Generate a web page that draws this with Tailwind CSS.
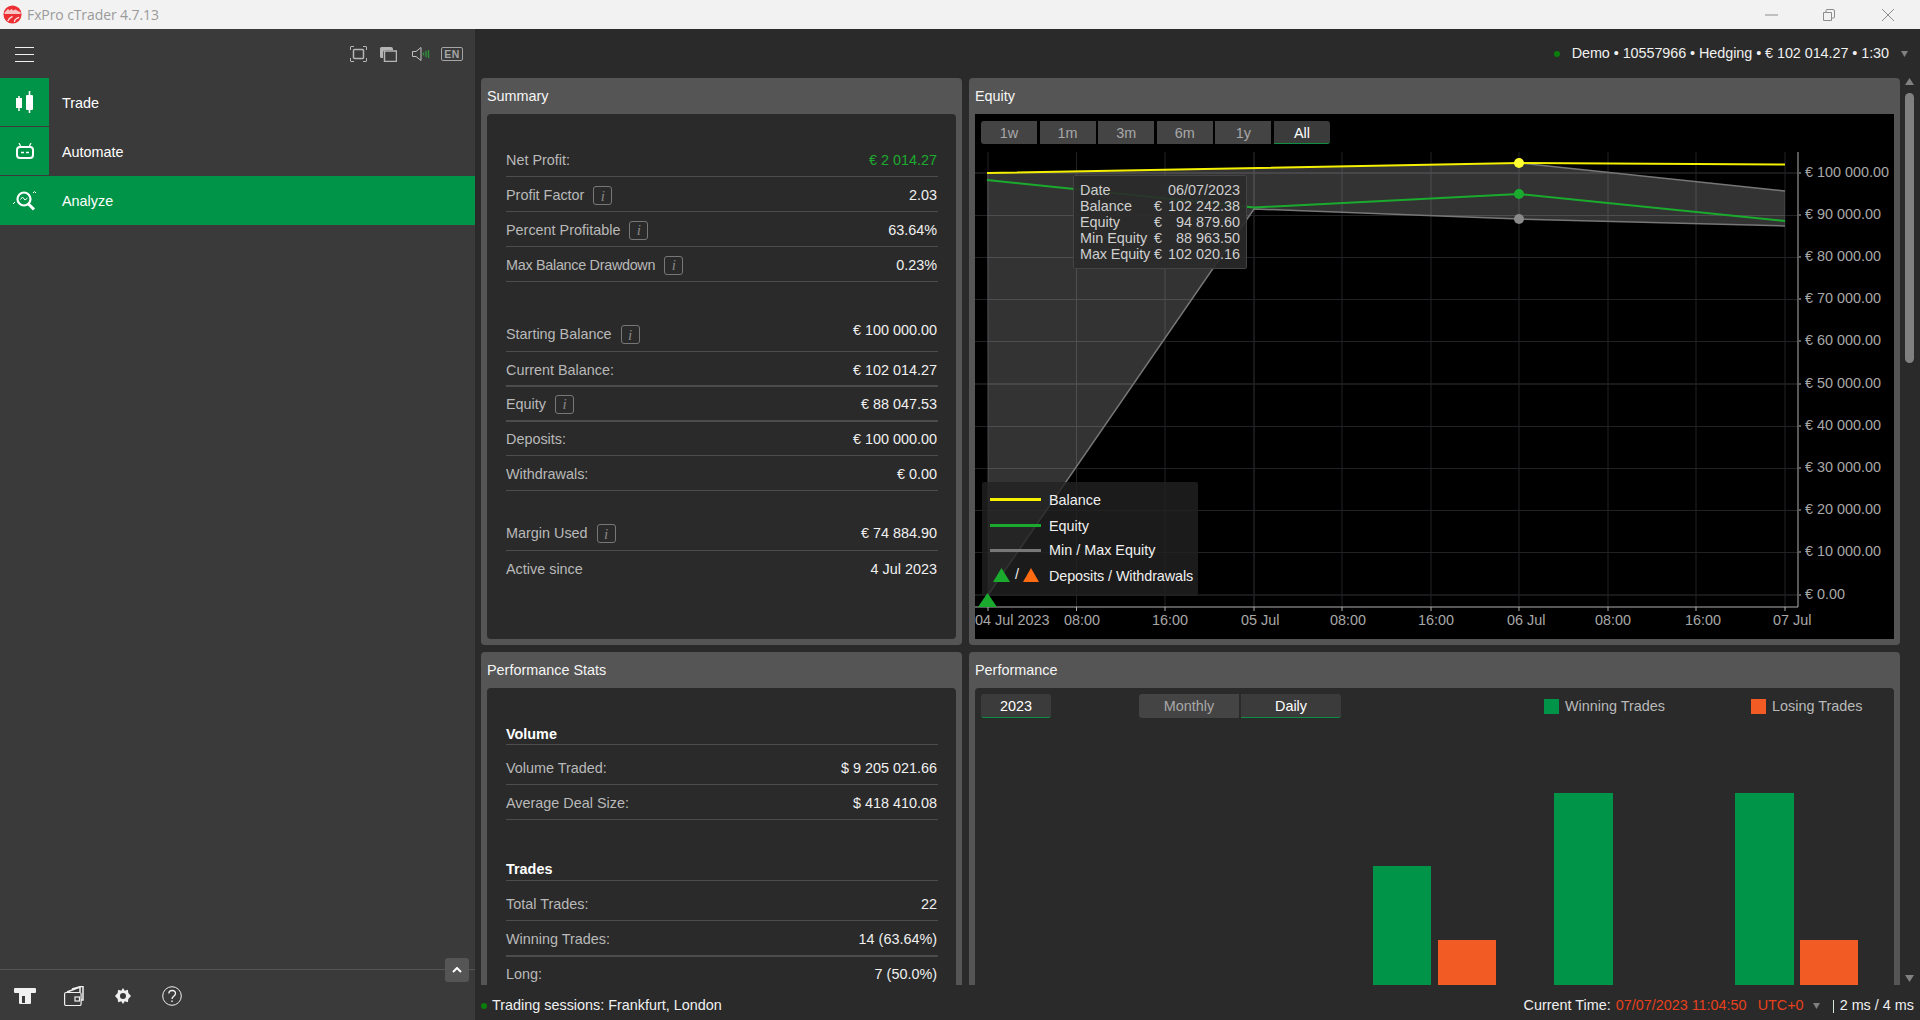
<!DOCTYPE html>
<html lang="en">
<head>
  <meta charset="UTF-8" />
  <title>FxPro cTrader 4.7.13</title>
  <script src="https://cdn.jsdelivr.net/npm/@tailwindcss/browser@4"></script>
</head>
<body class="bg-[#2a2a2a]">
<div class="flex h-[1020px] w-[1920px] flex-col overflow-hidden font-['Liberation_Sans',sans-serif] text-[14.4px] text-[#f0f0f0]">

  <!-- window title bar -->
  <header class="flex h-[29px] items-center bg-[#f2f2f2]">
    <svg class="ml-[3px] h-[19px] w-[19px]" viewBox="0 0 20 20">
      <circle cx="10" cy="10" r="9.500" fill="#ec2f33" />
      <path d="M1.500 7.500c3-1 2-3 4-3 1 0 1 2 2 1s1-2 2-1 1 2 2 1 2-1 3 0 2 1 4 2v2H2z" fill="#f9c6c6" />
      <path d="M5 17c1-3 3-4 5-5M12 18c0-2 2-4 5-5" fill="none" stroke="#fde3e3" stroke-width="1.400" />
    </svg>
    <span class="ml-[5px] font-['Open_Sans',sans-serif] text-[14px] tracking-[-0.1px] text-[#9a9a9a]">FxPro cTrader 4.7.13</span>
    <div class="ml-auto flex items-center">
      <svg class="mr-[45px] h-[12px] w-[13px]" viewBox="0 0 13 12"><path d="M0 6h13" stroke="#8c8c8c" /></svg>
      <svg class="mr-[47px] h-[12px] w-[12px]" viewBox="0 0 12 12"><path d="M.5 3.500h8v8h-8zM3 3V1.500q0-1 1-1h6q1.500 0 1.500 1.500v6q0 1-1 1H9" fill="none" stroke="#8c8c8c" /></svg>
      <svg class="mr-[26px] h-[12px] w-[12px]" viewBox="0 0 12 12"><path d="M0 0l12 12M12 0L0 12" stroke="#8c8c8c" /></svg>
    </div>
  </header>

  <div class="flex min-h-0 flex-1">
    <!-- left nav -->
    <aside class="relative flex w-[475px] flex-col bg-[#3a3a3a]">
      <div class="flex h-[49px] items-center pt-[1px] pl-[15px]">
        <svg class="h-[15px] w-[19px]" viewBox="0 0 19 15"><path d="M0 .5h19M0 7.500h19M0 14.500h19" stroke="#f0f0f0" /></svg>
        <div class="ml-[316px] flex items-center">
          <svg class="h-[16px] w-[17px]" viewBox="0 0 17 16" fill="none" stroke="#b5b5b5"><path d="M.5 4V1q0-.5.5-.5h3M13 .5h3q.5 0 .5.500v3M.5 12v3q0 .5.5.5h3M13 15.500h3q.5 0 .5-.5v-3" /><rect x="3.500" y="3.500" width="10" height="9" rx="1" stroke-width="1.500" /></svg>
          <svg class="ml-[13px] h-[15px] w-[17px]" viewBox="0 0 17 15"><path d="M0 1.500Q0 0 1.500 0H11q2 0 2 2v1H6Q3 3 3 6v5H1.500Q0 11 0 9.500z" fill="#b5b5b5" /><rect x="4.500" y="4" width="12" height="10.500" fill="none" stroke="#b5b5b5" stroke-width="1.500" /></svg>
          <svg class="ml-[15px] h-[14px] w-[19px]" viewBox="0 0 19 14" fill="none"><path d="M.5 4.500h3.500l5-4v13l-5-4H.5z" stroke="#c0c0c0" /><path d="M11.500 5.500v3" stroke="#2f8a3a" stroke-width="1.500" /><path d="M14 4v6" stroke="#2f8a3a" stroke-width="1.500" /><path d="M16.500 3v8" stroke="#2f8a3a" stroke-width="1.500" /></svg>
          <span class="ml-[10px] flex h-[14px] w-[22px] items-center justify-center rounded-[2px] border border-[#a5a5a5] text-[10.5px] leading-none font-bold tracking-[0.4px] text-[#a5a5a5]">EN</span>
        </div>
      </div>

      <nav class="flex flex-col gap-[1px]">
        <a class="flex h-[48px] items-center">
          <span class="flex h-full w-[49px] items-center justify-center bg-[#009448]">
            <svg class="h-[22px] w-[18px]" viewBox="0 0 18 22" fill="#fff"><rect x="0" y="7" width="6" height="10" /><rect x="2.250" y="5" width="1.500" height="15" /><rect x="10" y="4" width="7" height="15" rx="1" /><rect x="12.700" y="0" width="1.600" height="22" /></svg>
          </span>
          <span class="ml-[13px] pt-[3px] text-white">Trade</span>
        </a>
        <a class="flex h-[48px] items-center">
          <span class="flex h-full w-[49px] items-center justify-center bg-[#009448]">
            <svg class="h-[16px] w-[18px]" viewBox="0 0 18 16"><path d="M3 0l2 4M15 0l-2 4" stroke="#fff" stroke-width="1.200" /><rect x="1" y="4" width="16" height="11" rx="3" fill="none" stroke="#fff" stroke-width="2" /><path d="M5 9.500h3M10 9.500h3" stroke="#fff" stroke-width="1.500" /></svg>
          </span>
          <span class="ml-[13px] pt-[3px] text-white">Automate</span>
        </a>
        <a class="flex h-[49px] items-center bg-[#009448]">
          <span class="flex h-full w-[49px] items-center justify-center">
            <svg class="h-[21px] w-[23px]" viewBox="0 0 23 21" fill="none" stroke="#fff"><circle cx="11" cy="9" r="6.500" stroke-width="2.200" /><path d="M15.500 14l5.500 5.500" stroke-width="3" /><path d="M7.500 9.500l2-2.500 2.500 3 2.500-2" stroke-width="1" /><path d="M0 14l2-2M20 3l1.500-1.500L23 3" stroke-width="1" /></svg>
          </span>
          <span class="ml-[13px] pt-[2px] text-white">Analyze</span>
        </a>
      </nav>

      <div class="relative mt-auto h-[51px] border-t border-[#545454]">
        <div class="flex h-full items-center gap-[28px] pt-[1px] pl-[14px]">
          <svg class="h-[16px] w-[22px]" viewBox="0 0 22 16" fill="#f0f0f0"><rect x="0" y="0" width="22" height="5" rx="1" /><rect x="5" y="4" width="12" height="12" rx="1" /><rect x="8" y="8" width="3" height="7" fill="#3a3a3a" /></svg>
          <svg class="h-[20px] w-[21px]" viewBox="0 0 21 20" fill="none" stroke="#f0f0f0"><rect x=".6" y="6.500" width="16.500" height="13" rx="1.500" stroke-width="1.200" /><path d="M3 6l13-5v5" stroke-width="1.500" /><path d="M8 3l11-3v14h-2" stroke-width="1.500" /><rect x="11" y="11" width="4.500" height="4" stroke-width="1.200" /></svg>
          <svg class="ml-[2px] h-[16px] w-[16px]" viewBox="0 0 18 18"><path d="M9 0l2 3 3.500-1 .5 3.500L18 9l-3 3.500-.5 3.500-3.500-1-2 3-2-3-3.500 1L3 12.500 0 9l3-3.500.5-3.500L7 3z" fill="#f0f0f0" /><circle cx="9" cy="9" r="3.400" fill="#3a3a3a" /></svg>
          <svg class="ml-[3px] h-[20px] w-[20px]" viewBox="0 0 20 20" fill="none" stroke="#f0f0f0"><circle cx="10" cy="10" r="9.300" /><path d="M6.800 7.500C7 5 9 4.500 10 4.500c2 0 3.500 1.300 3.500 3 0 2.800-3.500 2.800-3.500 5.500" stroke-width="1.300" /><path d="M10 14.500v1.500" stroke-width="1.400" /></svg>
        </div>
        <button class="absolute top-[-12px] right-[6px] flex h-[24px] w-[24px] items-center justify-center rounded-[3px] bg-[#555]">
          <svg class="h-[6px] w-[10px]" viewBox="0 0 10 6"><path d="M1 5l4-4 4 4" fill="none" stroke="#fff" stroke-width="2" /></svg>
        </button>
      </div>
    </aside>

    <!-- main area -->
    <main class="flex min-w-0 flex-1 flex-col">
      <div class="flex h-[49px] items-center justify-end pt-[1px]">
        <span class="mr-[12px] h-[6px] w-[6px] rounded-full bg-[#0a7d0a]"></span>
        <span class="tracking-[-0.06px]">Demo • 10557966 • Hedging • € 102 014.27 • 1:30</span>
        <svg class="mr-[12px] ml-[12px] h-[6px] w-[7px]" viewBox="0 0 7 6"><path d="M0 0h7L3.500 6Z" fill="#808080" /></svg>
      </div>

      <div class="flex min-h-0 flex-1">
        <div class="grid h-[907px] grow grid-cols-[481px_931px] grid-rows-[567px_400px] gap-[7px] overflow-hidden pl-[6px]">

          <!-- Summary -->
          <section class="flex flex-col rounded-[4px] bg-[#555] px-[6px] pb-[6px]">
            <h2 class="flex h-[36px] shrink-0 items-center pt-[2px] text-[#f5f5f5]">Summary</h2>
            <div class="flex-1 rounded-[4px] bg-[#2a2a2a] pt-[28px] pr-[18px] pl-[19px] text-[#f0f0f0]">
              <div class="flex h-[35px] items-center justify-between border-b border-[#4c4c4c] pt-[4px]"><span class="text-[#b9b9b9]">Net Profit:</span><span class="pr-[1px] text-[#1cab2f]">€ 2 014.27</span></div>
              <div class="flex h-[35px] items-center justify-between border-b border-[#4c4c4c] pt-[4px]"><span class="flex items-center text-[#b9b9b9]">Profit Factor<i class="ml-[9px] flex h-[19px] w-[19px] items-center justify-center rounded-[3px] border border-[#777] font-['Liberation_Serif',serif] text-[15px] text-[#888]">i</i></span><span class="pr-[1px]">2.03</span></div>
              <div class="flex h-[35px] items-center justify-between border-b border-[#4c4c4c] pt-[3px]"><span class="flex items-center text-[#b9b9b9]">Percent Profitable<i class="ml-[9px] flex h-[19px] w-[19px] items-center justify-center rounded-[3px] border border-[#777] font-['Liberation_Serif',serif] text-[15px] text-[#888]">i</i></span><span class="pr-[1px]">63.64%</span></div>
              <div class="flex h-[35px] items-center justify-between border-b border-[#4c4c4c] pt-[3px]"><span class="flex items-center tracking-[-0.3px] text-[#b9b9b9]">Max Balance Drawdown<i class="ml-[9px] flex h-[19px] w-[19px] items-center justify-center rounded-[3px] border border-[#777] font-['Liberation_Serif',serif] text-[15px] text-[#888]">i</i></span><span class="pr-[1px]">0.23%</span></div>

              <div class="mt-[35px] flex h-[35px] items-center justify-between border-b border-[#4c4c4c] pt-[2px]"><span class="flex items-center text-[#b9b9b9]">Starting Balance<i class="ml-[9px] flex h-[19px] w-[19px] items-center justify-center rounded-[3px] border border-[#777] font-['Liberation_Serif',serif] text-[15px] text-[#888]">i</i></span><span class="mb-[8px] pr-[1px]">€ 100 000.00</span></div>
              <div class="flex h-[35px] items-center justify-between border-b-2 border-[#4c4c4c] pt-[4px]"><span class="text-[#b9b9b9]">Current Balance:</span><span class="pr-[1px]">€ 102 014.27</span></div>
              <div class="flex h-[35px] items-center justify-between border-b-2 border-[#4c4c4c] pt-[2px]"><span class="flex items-center text-[#b9b9b9]">Equity<i class="ml-[9px] flex h-[19px] w-[19px] items-center justify-center rounded-[3px] border border-[#777] font-['Liberation_Serif',serif] text-[15px] text-[#888]">i</i></span><span class="pr-[1px]">€ 88 047.53</span></div>
              <div class="flex h-[34px] items-center justify-between border-b border-[#4c4c4c] pt-[2px]"><span class="text-[#b9b9b9]">Deposits:</span><span class="pr-[1px]">€ 100 000.00</span></div>
              <div class="flex h-[35px] items-center justify-between border-b border-[#4c4c4c] pt-[3px]"><span class="text-[#b9b9b9]">Withdrawals:</span><span class="pr-[1px]">€ 0.00</span></div>

              <div class="mt-[25px] flex h-[35px] items-center justify-between border-b border-[#4c4c4c] pt-[2px]"><span class="flex items-center text-[#b9b9b9]">Margin Used<i class="ml-[9px] flex h-[19px] w-[19px] items-center justify-center rounded-[3px] border border-[#777] font-['Liberation_Serif',serif] text-[15px] text-[#888]">i</i></span><span class="pr-[1px]">€ 74 884.90</span></div>
              <div class="flex h-[35px] items-center justify-between pt-[2px]"><span class="text-[#b9b9b9]">Active since</span><span class="pr-[1px]">4 Jul 2023</span></div>
            </div>
          </section>

          <!-- Equity -->
          <section class="flex flex-col rounded-[4px] bg-[#555] px-[6px] pb-[6px]">
            <h2 class="flex h-[36px] shrink-0 items-center pt-[2px] text-[#f5f5f5]">Equity</h2>
            <div class="relative flex-1 bg-black">
              <svg class="absolute inset-0 h-full w-full" viewBox="975 114 919 525" font-family="Liberation Sans" font-size="14.400">
                <g stroke="#222226">
                  <path d="M988 152V607M1076.500 152V607M1165 152V607M1342 152V607M1431 152V607M1519 152V607M1608 152V607M1696 152V607M1785 152V607" />
                  <path d="M975 215.500H1798M975 257.500H1798M975 299.500H1798M975 341.500H1798M975 426.500H1798M975 468.500H1798M975 510.500H1798M975 552.500H1798" />
                  <path d="M975 173H1798M975 384H1798M975 595H1798M1254 152V607" stroke-width="1.500" />
                </g>
                <path d="M987 173L1519 163L1785 191L1785 226L1519 219L1254 209L988 595Z" fill="#fff" fill-opacity="0.2" />
                <path d="M1519 163L1785 191M1785 226L1519 219L1254 209L988 595" fill="none" stroke="#777" stroke-width="1.500" />
                <path d="M987 180L1254 207.500L1519 194L1785 221" fill="none" stroke="#1aab2e" stroke-width="2" />
                <path d="M987 173L1519 163L1785 164.500" fill="none" stroke="#f4f000" stroke-width="2" />
                <circle cx="1519" cy="219" r="5" fill="#8a8a8a" />
                <circle cx="1519" cy="194" r="5" fill="#1aab2e" />
                <circle cx="1519" cy="163" r="5" fill="#ffff33" />
                <path d="M1798 152V607H975" fill="none" stroke="#b0b0b0" />
                <path d="M988 607v4M1076.500 607v4M1165 607v4M1254 607v4M1342 607v4M1431 607v4M1519 607v4M1608 607v4M1696 607v4M1785 607v4M1799 173h2M1799 215h2M1799 257h2M1799 299h2M1799 341h2M1799 384h2M1799 426h2M1799 468h2M1799 510h2M1799 552h2M1799 595h2" stroke="#b0b0b0" />
                <g fill="#a8a8a8">
                  <text x="1805" y="177">€ 100 000.00</text>
                  <text x="1805" y="219">€ 90 000.00</text>
                  <text x="1805" y="261">€ 80 000.00</text>
                  <text x="1805" y="303">€ 70 000.00</text>
                  <text x="1805" y="345">€ 60 000.00</text>
                  <text x="1805" y="388">€ 50 000.00</text>
                  <text x="1805" y="430">€ 40 000.00</text>
                  <text x="1805" y="472">€ 30 000.00</text>
                  <text x="1805" y="514">€ 20 000.00</text>
                  <text x="1805" y="556">€ 10 000.00</text>
                  <text x="1805" y="599">€ 0.00</text>
                  <text x="975" y="625">04 Jul 2023</text>
                  <text x="1064" y="625">08:00</text>
                  <text x="1152" y="625">16:00</text>
                  <text x="1241" y="625">05 Jul</text>
                  <text x="1330" y="625">08:00</text>
                  <text x="1418" y="625">16:00</text>
                  <text x="1507" y="625">06 Jul</text>
                  <text x="1595" y="625">08:00</text>
                  <text x="1685" y="625">16:00</text>
                  <text x="1773" y="625">07 Jul</text>
                </g>
              </svg>

              <div class="relative flex gap-[2.6px] pt-[7px] pl-[6px] text-[#a8a8a8]">
                <button class="h-[23px] w-[56px] rounded-l-[3px] bg-[#444] pt-[2px]">1w</button>
                <button class="h-[23px] w-[56px] bg-[#444] pt-[2px]">1m</button>
                <button class="h-[23px] w-[56px] bg-[#444] pt-[2px]">3m</button>
                <button class="h-[23px] w-[56px] bg-[#444] pt-[2px]">6m</button>
                <button class="h-[23px] w-[56px] bg-[#444] pt-[2px]">1y</button>
                <button class="h-[23px] w-[56px] rounded-r-[3px] border-b border-[#0f8f43] bg-[#3b3b3b] pt-[2px] text-white">All</button>
              </div>

              <!-- hover tooltip -->
              <div class="absolute top-[61px] left-[98px] grid h-[94px] w-[174px] grid-cols-[74px_auto_1fr] rounded-[2px] border border-[#444] bg-[#2a2a2a]/90 px-[6px] py-[6px] text-[14.4px] leading-[16px] text-[#cfcfcf]">
                <span>Date</span><span class="col-span-2 text-right">06/07/2023</span>
                <span>Balance</span><span>€</span><span class="text-right">102 242.38</span>
                <span>Equity</span><span>€</span><span class="text-right">94 879.60</span>
                <span>Min Equity</span><span>€</span><span class="text-right">88 963.50</span>
                <span class="whitespace-nowrap tracking-[-0.1px]">Max Equity</span><span>€</span><span class="text-right">102 020.16</span>
              </div>

              <!-- chart legend -->
              <div class="absolute top-[368px] left-[7px] h-[114px] w-[216px] rounded-[2px] bg-[#222]/80 text-[#f0f0f0]">
                <div class="flex h-[25px] items-center pt-[10px] pl-[8px]"><span class="h-[3px] w-[51px] bg-[#f4f000]"></span><span class="ml-[8px] pt-[2px]">Balance</span></div>
                <div class="mt-[10px] flex h-[16px] items-center pl-[8px]"><span class="h-[3px] w-[51px] bg-[#1aab2e]"></span><span class="ml-[8px] pt-[3px]">Equity</span></div>
                <div class="mt-[9px] flex h-[16px] items-center pl-[8px]"><span class="h-[3px] w-[51px] bg-[#777]"></span><span class="ml-[8px] pt-[2px]">Min / Max Equity</span></div>
                <div class="mt-[9px] flex h-[16px] items-center pl-[10px]">
                  <svg class="h-[14px] w-[47px]" viewBox="0 0 47 14"><path d="M9.500 0L18 14H1Z" fill="#1aab2e" /><path d="M39 0L47 14H31Z" fill="#ff6a13" /></svg>
                  <span class="absolute left-[33px]">/</span>
                  <span class="ml-[2px] pt-[3px] pl-[8px] tracking-[-0.1px]">Deposits / Withdrawals</span>
                </div>
              </div>

              <!-- first deposit marker sits on top of the legend -->
              <svg class="absolute top-[479px] left-[3px] h-[14px] w-[19px]" viewBox="0 0 19 14"><path d="M9.500 0L19 14H0Z" fill="#1aab2e" /></svg>
            </div>
          </section>

          <!-- Performance Stats -->
          <section class="flex flex-col rounded-[4px] bg-[#555] px-[6px]">
            <h2 class="flex h-[36px] shrink-0 items-center pt-[2px] text-[#f5f5f5]">Performance Stats</h2>
            <div class="flex-1 rounded-[4px] bg-[#2a2a2a] pt-[32px] pr-[18px] pl-[19px]">
              <div class="flex h-[25px] items-center border-b border-[#4c4c4c] pt-[5px] font-bold text-white">Volume</div>
              <div class="flex h-[40px] items-center justify-between border-b border-[#4c4c4c] pt-[8px]"><span class="text-[#b9b9b9]">Volume Traded:</span><span class="pr-[1px]">$ 9 205 021.66</span></div>
              <div class="flex h-[35px] items-center justify-between border-b border-[#4c4c4c] pt-[4px]"><span class="text-[#b9b9b9]">Average Deal Size:</span><span class="pr-[1px]">$ 418 410.08</span></div>

              <div class="mt-[35px] flex h-[26px] items-center border-b border-[#4c4c4c] pt-[4px] font-bold text-white">Trades</div>
              <div class="flex h-[40px] items-center justify-between border-b border-[#4c4c4c] pt-[8px]"><span class="text-[#b9b9b9]">Total Trades:</span><span class="pr-[1px]">22</span></div>
              <div class="flex h-[36px] items-center justify-between border-b-2 border-[#4c4c4c] pt-[4px]"><span class="text-[#b9b9b9]">Winning Trades:</span><span class="pr-[1px]">14 (63.64%)</span></div>
              <div class="flex h-[35px] items-center justify-between"><span class="text-[#b9b9b9]">Long:</span><span class="pr-[1px]">7 (50.0%)</span></div>
            </div>
          </section>

          <!-- Performance -->
          <section class="flex flex-col rounded-[4px] bg-[#555] px-[6px]">
            <h2 class="flex h-[36px] shrink-0 items-center pt-[2px] text-[#f5f5f5]">Performance</h2>
            <div class="relative flex-1 rounded-[4px] bg-[#2a2a2a]">
              <svg class="absolute inset-0 h-full w-full" viewBox="975 688 919 364">
                <rect x="1373" y="866" width="58" height="190" fill="#009448" />
                <rect x="1438" y="940" width="58" height="116" fill="#f35b24" />
                <rect x="1554" y="793" width="59" height="263" fill="#009448" />
                <rect x="1735" y="793" width="59" height="263" fill="#009448" />
                <rect x="1800" y="940" width="58" height="116" fill="#f35b24" />
              </svg>
              <div class="relative flex items-center pt-[6px] pl-[6px]">
                <button class="h-[24px] w-[70px] rounded-[3px] border-b border-[#0f8f43] bg-[#3b3b3b] pt-[2px] text-white">2023</button>
                <button class="ml-[88px] h-[24px] w-[100px] rounded-l-[3px] bg-[#444] pt-[2px] text-[#a8a8a8]">Monthly</button>
                <button class="ml-[2px] h-[24px] w-[100px] rounded-r-[3px] border-b border-[#0f8f43] bg-[#3b3b3b] pt-[2px] text-white">Daily</button>
                <span class="ml-[203px] h-[15px] w-[15px] bg-[#009448]"></span>
                <span class="ml-[6px] w-[186px] pt-[2px] text-[#b9b9b9]">Winning Trades</span>
                <span class="h-[15px] w-[15px] bg-[#f35b24]"></span>
                <span class="ml-[6px] pt-[2px] text-[#b9b9b9]">Losing Trades</span>
              </div>
            </div>
          </section>
        </div>

        <!-- page scrollbar -->
        <div class="flex w-[20px] shrink-0 flex-col items-center pr-[1px] pb-[1px]">
          <svg class="h-[15px] w-[9px]" viewBox="0 0 9 15"><path d="M4.500 0L9 7H0Z" fill="#808080" /></svg>
          <div class="h-[270px] w-[9px] rounded-full bg-[#808080]"></div>
          <svg class="mt-auto h-[9px] w-[9px]" viewBox="0 0 9 9"><path d="M0 0h9L4.500 7Z" fill="#808080" /></svg>
        </div>
      </div>

      <!-- status bar -->
      <footer class="flex h-[35px] shrink-0 items-center pt-[7px] pr-[6px] pl-[6px]">
        <span class="h-[6px] w-[6px] rounded-full bg-[#0a7d0a]"></span>
        <span class="ml-[5px]">Trading sessions: Frankfurt, London</span>
        <span class="ml-auto">Current Time:</span>
        <span class="ml-[5px] text-[#e8401c]">07/07/2023 11:04:50</span>
        <span class="ml-[11px] text-[#e8401c]">UTC+0</span>
        <svg class="ml-[9px] h-[6px] w-[7px]" viewBox="0 0 7 6"><path d="M0 0h7L3.500 6Z" fill="#808080" /></svg>
        <span class="ml-[13px] h-[13px] w-px bg-[#d5e8d5]"></span>
        <span class="ml-[6px]">2 ms / 4 ms</span>
      </footer>
    </main>
  </div>
</div>
</body>
</html>
